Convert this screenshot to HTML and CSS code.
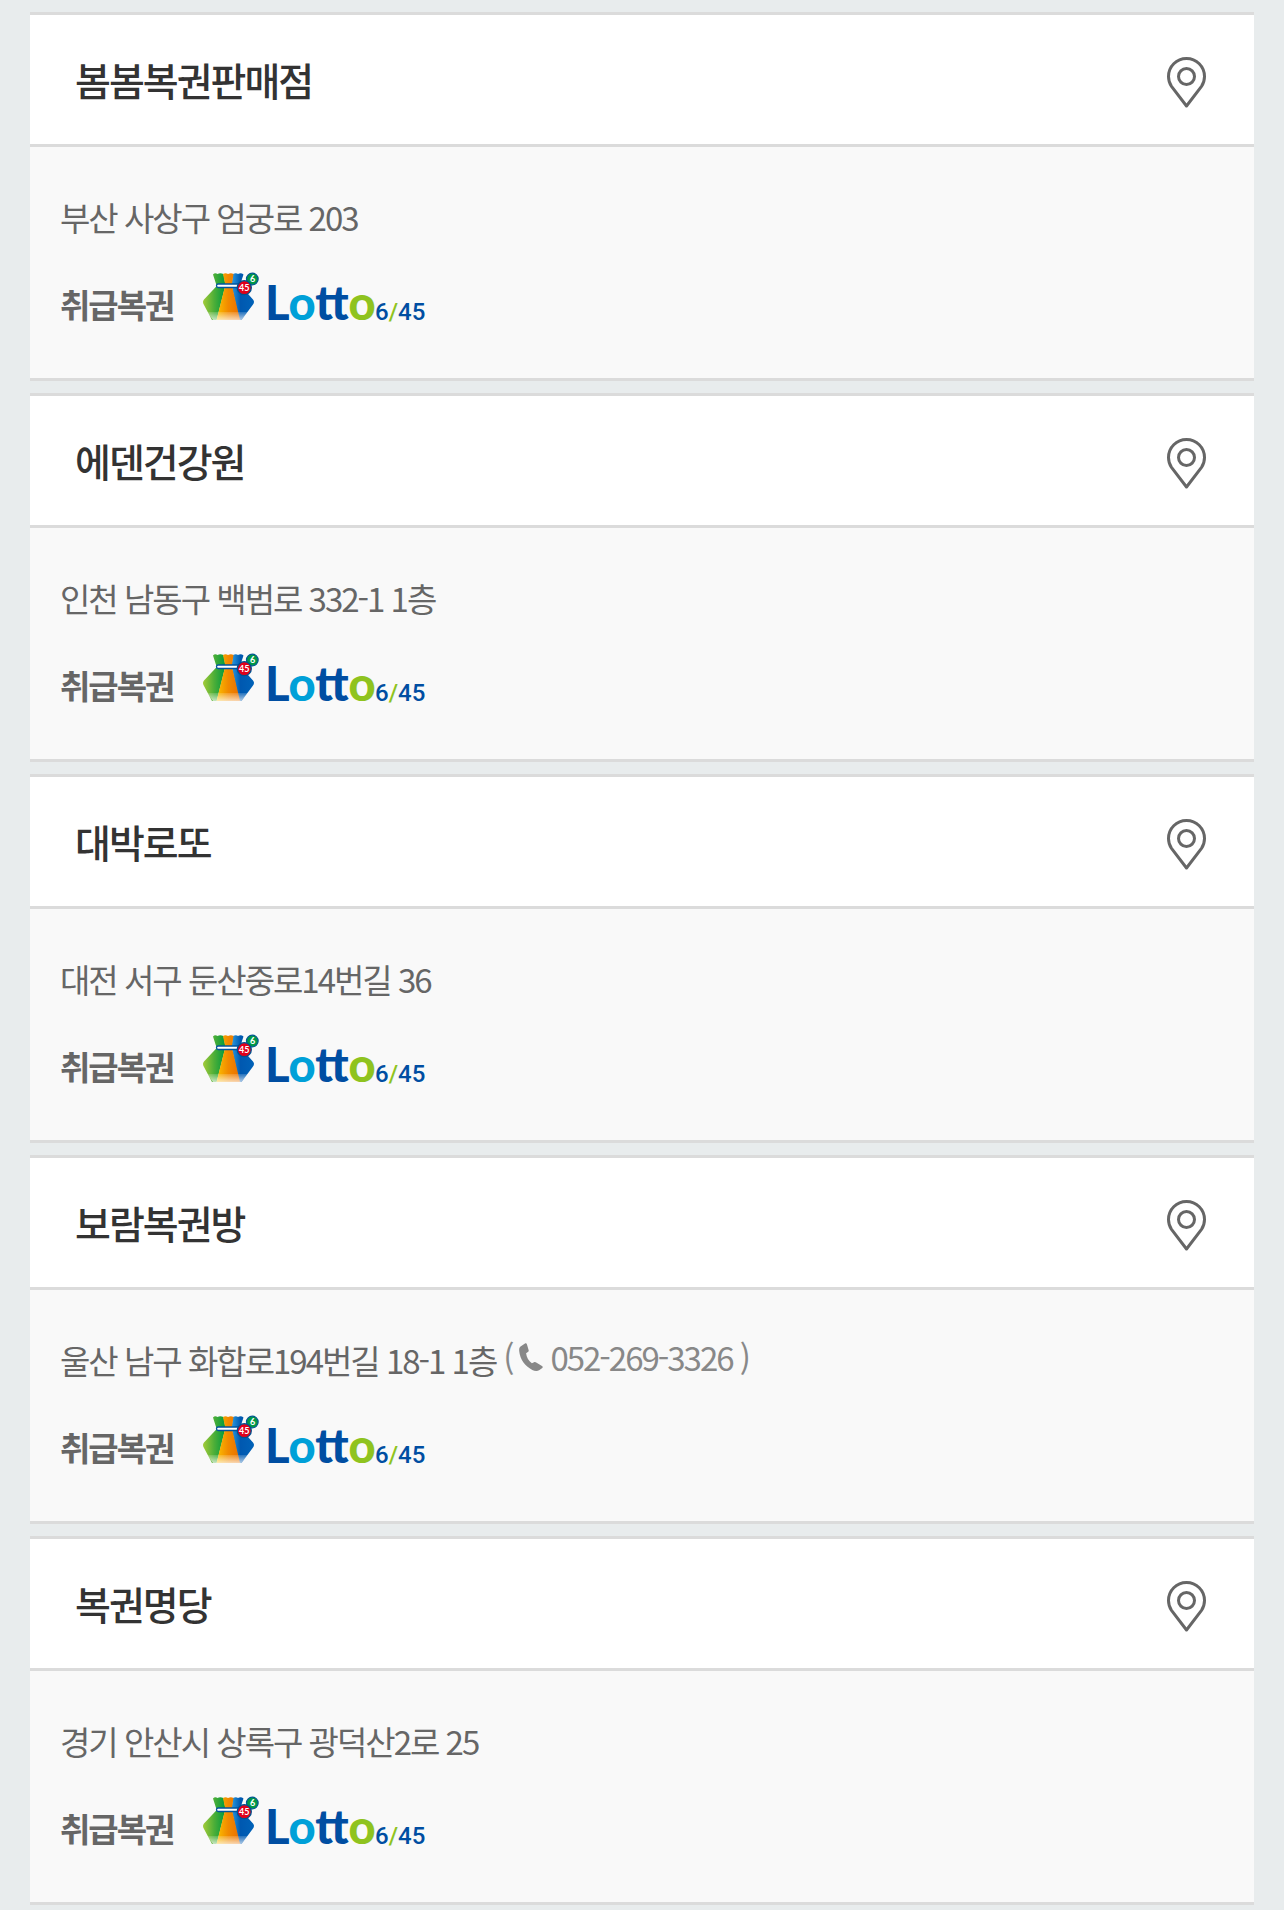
FILE: index.html
```html
<!DOCTYPE html>
<html lang="ko">
<head>
    <meta charset="UTF-8">
    <meta name="viewport" content="width=device-width, initial-scale=1.0">
    <title>복권 판매점</title>
    <link rel="stylesheet" href="styles.css">
</head>
<body>
    <svg class="sprite" aria-hidden="true">
        <defs>
            <linearGradient id="green" x1="0" y1="0" x2="1" y2="0">
                <stop offset="0" stop-color="#a3cb38"/>
                <stop offset="0.5" stop-color="#4cae38"/>
                <stop offset="1" stop-color="#009a3e"/>
            </linearGradient>
            <linearGradient id="orange" x1="0" y1="0" x2="1" y2="0">
                <stop offset="0" stop-color="#fbc000"/>
                <stop offset="0.5" stop-color="#f18a00"/>
                <stop offset="1" stop-color="#e96f00"/>
            </linearGradient>
            <linearGradient id="blue" x1="0" y1="0" x2="1" y2="0">
                <stop offset="0" stop-color="#2a9be0"/>
                <stop offset="0.4" stop-color="#0058b0"/>
                <stop offset="1" stop-color="#0062b8"/>
            </linearGradient>
            <linearGradient id="shine" x1="0" y1="0" x2="0" y2="1">
                <stop offset="0" stop-color="#fff" stop-opacity="0.15"/>
                <stop offset="1" stop-color="#fff" stop-opacity="0.7"/>
            </linearGradient>
        </defs>
        <symbol id="pin" viewBox="0 0 39 51">
            <path d="M19.5 1.5C9.500 1.500 1.500 9.500 1.500 19.500C1.500 23.500 2.500 26.500 4.500 29.300L19.500 49L34.500 29.300C36.500 26.500 37.500 23.500 37.500 19.500C37.500 9.500 29.500 1.500 19.500 1.500Z" fill="none" stroke="#666" stroke-width="3" stroke-linejoin="round"/>
            <circle cx="19.500" cy="19.500" r="8" fill="none" stroke="#666" stroke-width="3"/>
        </symbol>
        <symbol id="phone" viewBox="0 0 24 28">
            <path d="M1.500 3.500L6 .5C7 0 7.600 .4 7.900 1.300L9.600 7C9.900 8 9.600 8.600 8.900 9.100L7.100 10.300C7.600 14.500 9.600 17.800 12.900 20.300L15 19.200C15.900 18.700 16.500 18.900 17.200 19.400L23 23C23.800 23.500 24 24.200 23.300 24.900L20.500 27C18.500 28.300 15.800 28.200 13.300 26.900C6 23 1 16.500 .2 8C.1 6 .3 4.500 1.500 3.500Z" fill="#888"/>
        </symbol>
        <symbol id="bag" viewBox="0 0 60 54">
            <path d="M11 4.500Q13 2.500 15.500 4Q18 2.500 21.500 4L23.500 15L14.700 50H10L2 35Q0 31.700 2 29.500L14.700 16Z" fill="url(#green)"/>
            <path d="M31 4Q34 2.500 36 4Q39 2.500 41.500 4.500L38 15L51 29.500Q53 31.700 51 34.500L39.500 50H37L29.500 15Z" fill="url(#blue)"/>
            <path d="M21 4Q23.500 2.500 26 4Q29 2.500 31.500 4L29.800 15L38 50H14.500L23.300 15Z" fill="url(#orange)"/>
            <path d="M5 42H46L39.500 50H11Z" fill="url(#shine)"/>
            <rect x="14.500" y="14" width="25" height="3.500" rx="1.700" fill="#fff" stroke="#00549f" stroke-width="1.300"/>
            <circle cx="50.300" cy="9" r="5.800" fill="#009845" stroke="#005a8f" stroke-width="1.300"/>
            <circle cx="42.300" cy="17.700" r="7" fill="#e1001a" stroke="#00508f" stroke-width="1.300"/>
        </symbol>
    </svg>
    <ul class="store-list">
        <li class="store">
            <div class="store-head">
                <h2 class="store-name">봄봄복권판매점</h2>
                <a class="map-link" href="#" aria-label="지도 보기"><svg class="pin"><use href="#pin"/></svg></a>
            </div>
            <div class="store-body">
                <p class="address">부산 사상구 엄궁로 203</p>
                <div class="lottery">
                    <strong class="label">취급복권</strong>
                    <svg class="logo" viewBox="0 0 226 54">
                        <use href="#bag" width="60" height="54"/>
                        <text class="ball-num" x="48" y="12">6</text>
                        <text class="ball-num" x="37" y="21">45</text>
                        <text class="logo-name" x="63" y="50">L<tspan class="sky">o</tspan>tt<tspan class="lime">o</tspan></text>
                        <text class="logo-num" x="173" y="50">6<tspan class="lime">/</tspan>45</text>
                    </svg>
                </div>
            </div>
        </li>
        <li class="store">
            <div class="store-head">
                <h2 class="store-name">에덴건강원</h2>
                <a class="map-link" href="#" aria-label="지도 보기"><svg class="pin"><use href="#pin"/></svg></a>
            </div>
            <div class="store-body">
                <p class="address">인천 남동구 백범로 332-1 1층</p>
                <div class="lottery">
                    <strong class="label">취급복권</strong>
                    <svg class="logo" viewBox="0 0 226 54">
                        <use href="#bag" width="60" height="54"/>
                        <text class="ball-num" x="48" y="12">6</text>
                        <text class="ball-num" x="37" y="21">45</text>
                        <text class="logo-name" x="63" y="50">L<tspan class="sky">o</tspan>tt<tspan class="lime">o</tspan></text>
                        <text class="logo-num" x="173" y="50">6<tspan class="lime">/</tspan>45</text>
                    </svg>
                </div>
            </div>
        </li>
        <li class="store">
            <div class="store-head">
                <h2 class="store-name">대박로또</h2>
                <a class="map-link" href="#" aria-label="지도 보기"><svg class="pin"><use href="#pin"/></svg></a>
            </div>
            <div class="store-body">
                <p class="address">대전 서구 둔산중로14번길 36</p>
                <div class="lottery">
                    <strong class="label">취급복권</strong>
                    <svg class="logo" viewBox="0 0 226 54">
                        <use href="#bag" width="60" height="54"/>
                        <text class="ball-num" x="48" y="12">6</text>
                        <text class="ball-num" x="37" y="21">45</text>
                        <text class="logo-name" x="63" y="50">L<tspan class="sky">o</tspan>tt<tspan class="lime">o</tspan></text>
                        <text class="logo-num" x="173" y="50">6<tspan class="lime">/</tspan>45</text>
                    </svg>
                </div>
            </div>
        </li>
        <li class="store">
            <div class="store-head">
                <h2 class="store-name">보람복권방</h2>
                <a class="map-link" href="#" aria-label="지도 보기"><svg class="pin"><use href="#pin"/></svg></a>
            </div>
            <div class="store-body">
                <p class="address">울산 남구 화합로194번길 18-1 1층 <a class="tel" href="tel:052-269-3326">(<svg class="phone"><use href="#phone"/></svg>052-269-3326 )</a></p>
                <div class="lottery">
                    <strong class="label">취급복권</strong>
                    <svg class="logo" viewBox="0 0 226 54">
                        <use href="#bag" width="60" height="54"/>
                        <text class="ball-num" x="48" y="12">6</text>
                        <text class="ball-num" x="37" y="21">45</text>
                        <text class="logo-name" x="63" y="50">L<tspan class="sky">o</tspan>tt<tspan class="lime">o</tspan></text>
                        <text class="logo-num" x="173" y="50">6<tspan class="lime">/</tspan>45</text>
                    </svg>
                </div>
            </div>
        </li>
        <li class="store">
            <div class="store-head">
                <h2 class="store-name">복권명당</h2>
                <a class="map-link" href="#" aria-label="지도 보기"><svg class="pin"><use href="#pin"/></svg></a>
            </div>
            <div class="store-body">
                <p class="address">경기 안산시 상록구 광덕산2로 25</p>
                <div class="lottery">
                    <strong class="label">취급복권</strong>
                    <svg class="logo" viewBox="0 0 226 54">
                        <use href="#bag" width="60" height="54"/>
                        <text class="ball-num" x="48" y="12">6</text>
                        <text class="ball-num" x="37" y="21">45</text>
                        <text class="logo-name" x="63" y="50">L<tspan class="sky">o</tspan>tt<tspan class="lime">o</tspan></text>
                        <text class="logo-num" x="173" y="50">6<tspan class="lime">/</tspan>45</text>
                    </svg>
                </div>
            </div>
        </li>
    </ul>
</body>
</html>
```
FILE: styles.css
```css
* {
    box-sizing: border-box;
    margin: 0;
    padding: 0;
}
body {
    background: #e8eced;
    color: #666;
    font-family: "Noto Sans CJK KR", sans-serif;
    font-size: 33px;
    letter-spacing: -2px;
}
.sprite {
    position: absolute;
    width: 0;
    height: 0;
}
.store-list {
    display: flex;
    flex-direction: column;
    gap: 12px;
    padding: 12px 30px 6px;
    list-style: none;
}
.store {
    border-top: 3px solid #dbdbdb;
    border-bottom: 3px solid #dbdbdb;
    background: #f9f9f9;
}
.store-head {
    display: flex;
    justify-content: space-between;
    align-items: center;
    padding: 36px 48px 36px 45px;
    border-bottom: 3px solid #dbdbdb;
    background: #fff;
}
.store-name {
    color: #333;
    font-size: 39px;
    font-weight: 500;
    line-height: 57px;
}
.map-link {
    padding-top: 6px;
}
.map-link,
.pin,
.logo {
    display: block;
}
.pin {
    width: 39px;
    height: 51px;
}
.store-body {
    padding: 45px 30px;
}
.address {
    display: flex;
    align-items: flex-start;
    gap: 7px;
    font-weight: 400;
    line-height: 50px;
}
.tel {
    display: flex;
    align-items: center;
    gap: 7px;
    color: #888;
    line-height: 44px;
    text-decoration: none;
}
.phone {
    width: 24px;
    height: 28px;
}
.lottery {
    display: flex;
    align-items: flex-start;
    gap: 29px;
    height: 63px;
    margin-top: 28px;
}
.label {
    font-weight: 700;
    line-height: 68px;
}
.logo {
    width: 226px;
    height: 54px;
    overflow: visible;
    letter-spacing: 0;
}
.logo-name {
    fill: #004ea2;
    font-family: "Lato", sans-serif;
    font-size: 47px;
    font-weight: 900;
}
.logo-num {
    fill: #004ea2;
    font-family: "Roboto", sans-serif;
    font-size: 24px;
    font-weight: 500;
}
.sky {
    fill: #00a0d8;
}
.lime {
    fill: #8fc31f;
}
.ball-num {
    fill: #fff;
    font-family: "Lato", sans-serif;
    font-size: 9px;
    font-weight: 700;
}
```
